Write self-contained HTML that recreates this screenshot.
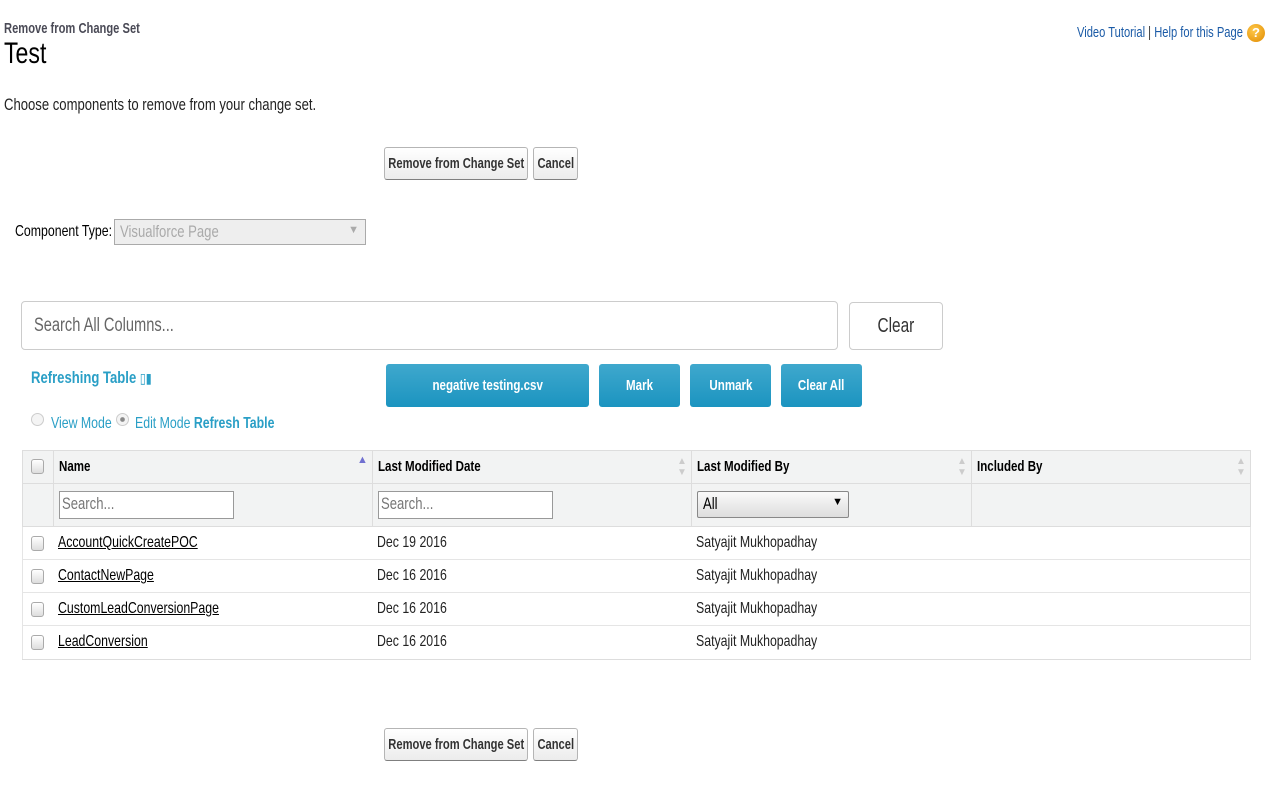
<!DOCTYPE html>
<html><head><meta charset="utf-8"><style>
*{box-sizing:border-box}
body{margin:0;width:1280px;height:800px;background:#fff;font-family:"Liberation Sans",sans-serif;color:#222;position:relative;overflow:hidden;white-space:nowrap}
.a{position:absolute}
.n{display:inline-block;transform:scaleX(.77);transform-origin:left center}
.c{display:inline-block;transform:scaleX(.77);transform-origin:center center;flex:none}
.btn{position:absolute;height:33px;border:1px solid #b5b5b5;border-bottom-color:#7f7f7f;border-radius:3px;background:linear-gradient(#fff,#ececec);font-weight:bold;font-size:14.5px;color:#333;display:flex;justify-content:center;align-items:center}
.bb{position:absolute;top:364px;height:43px;border-radius:3px;background:linear-gradient(#3fa8cd,#1b94c0);color:#fff;font-weight:bold;font-size:15px;display:flex;justify-content:center;align-items:center}
.cb{position:absolute;width:13px;height:15px;border:1px solid #aaa;border-radius:3px;background:linear-gradient(#fff,#ddd)}
.row{position:absolute;left:22px;width:1229px;height:33px;border-bottom:1px solid #e5e5e5;font-size:16px}
.row span{position:absolute;top:7px;display:inline-block;transform:scaleX(.77);transform-origin:left center}
.inp{position:absolute;height:28px;border:1px solid #999;background:#fff;font-size:17px;color:#777;padding:2px 2px}
</style></head><body>
<div class="a" style="left:4px;top:21px;font-size:14.5px;font-weight:bold;color:#4a4a56"><span class="n">Remove from Change Set</span></div>
<div class="a" style="left:4px;top:37px;font-size:30px;color:#000"><span class="n">Test</span></div>
<div class="a" style="left:1077px;top:25px;font-size:14.5px;color:#1a5aa6"><span class="n">Video Tutorial <span style="color:#333">|</span> Help for this Page</span></div>
<div class="a" style="left:1247px;top:24px;width:18px;height:18px;border-radius:50%;background:radial-gradient(circle at 40% 35%,#ffc94a,#e08a00);color:#fff;font-weight:bold;font-size:13px;text-align:center;line-height:18px">?</div>
<div class="a" style="left:4px;top:95px;font-size:17px;color:#222"><span class="n">Choose components to remove from your change set.</span></div>
<div class="btn" style="left:384px;top:147px;width:144px"><span class="c">Remove from Change Set</span></div>
<div class="btn" style="left:533px;top:147px;width:45px"><span class="c">Cancel</span></div>
<div class="a" style="left:15px;top:223px;font-size:16px;color:#000"><span class="n">Component Type:</span></div>
<div class="a" style="left:114px;top:219px;width:252px;height:26px;border:1px solid #aaa;background:#eee;color:#aaa;font-size:17px;padding:2px 5px"><span class="n">Visualforce Page</span><span style="position:absolute;right:6px;top:4px;font-size:11px">▼</span></div>
<div class="a" style="left:21px;top:301px;width:817px;height:49px;border:1px solid #ccc;border-radius:4px;font-size:19px;color:#666;padding:13px 12px"><span class="n">Search All Columns...</span></div>
<div class="a" style="left:849px;top:302px;width:94px;height:48px;border:1px solid #ccc;border-radius:4px;font-size:20px;color:#333;display:flex;justify-content:center;align-items:center"><span class="c">Clear</span></div>
<div class="a" style="left:31px;top:368px;font-size:17px;font-weight:bold;color:#2a9fc6"><span class="n">Refreshing Table <span style="font-weight:normal;font-size:14px">▯▮</span></span></div>
<div class="bb" style="left:386px;width:203px"><span class="c">negative testing.csv</span></div>
<div class="bb" style="left:599px;width:81px"><span class="c">Mark</span></div>
<div class="bb" style="left:690px;width:81px"><span class="c">Unmark</span></div>
<div class="bb" style="left:781px;width:81px"><span class="c">Clear All</span></div>
<div class="a" style="left:31px;top:413px;width:13px;height:13px;border-radius:50%;border:1px solid #ccc;background:#f4f4f4"></div>
<div class="a" style="left:51px;top:415px;font-size:16px;color:#2a9fc6"><span class="n">View Mode</span></div>
<div class="a" style="left:116px;top:413px;width:13px;height:13px;border-radius:50%;border:1px solid #ccc;background:radial-gradient(#888 25%,#f4f4f4 35%)"></div>
<div class="a" style="left:135px;top:415px;font-size:16px;color:#2a9fc6"><span class="n">Edit Mode <b>Refresh Table</b></span></div>
<div class="a" style="left:22px;top:450px;width:1229px;height:77px;background:#f2f3f3;border:1px solid #ddd"></div>
<div class="a" style="left:22px;top:483px;width:1229px;height:1px;background:#ddd"></div>
<div class="a" style="left:53px;top:450px;width:1px;height:77px;background:#ddd"></div>
<div class="a" style="left:372px;top:450px;width:1px;height:77px;background:#ddd"></div>
<div class="a" style="left:691px;top:450px;width:1px;height:77px;background:#ddd"></div>
<div class="a" style="left:971px;top:450px;width:1px;height:77px;background:#ddd"></div>
<div class="cb" style="left:31px;top:459px"></div>
<div class="a" style="left:59px;top:458px;font-size:15px;font-weight:bold;color:#000"><span class="n">Name</span></div>
<div class="a" style="left:357px;top:454px;font-size:11px;color:#7070d0">▲</div>
<div class="a" style="left:378px;top:458px;font-size:15px;font-weight:bold;color:#000"><span class="n">Last Modified Date</span></div>
<div class="a" style="left:677px;top:456px;font-size:10px;color:#ccc;line-height:11px">▲<br>▼</div>
<div class="a" style="left:697px;top:458px;font-size:15px;font-weight:bold;color:#000"><span class="n">Last Modified By</span></div>
<div class="a" style="left:957px;top:456px;font-size:10px;color:#ccc;line-height:11px">▲<br>▼</div>
<div class="a" style="left:977px;top:458px;font-size:15px;font-weight:bold;color:#000"><span class="n">Included By</span></div>
<div class="a" style="left:1236px;top:456px;font-size:10px;color:#ccc;line-height:11px">▲<br>▼</div>
<div class="inp" style="left:59px;top:491px;width:175px"><span class="n">Search...</span></div>
<div class="inp" style="left:378px;top:491px;width:175px"><span class="n">Search...</span></div>
<div class="a" style="left:697px;top:491px;width:152px;height:27px;border:1px solid #888;border-radius:2px;background:linear-gradient(#fafafa,#ddd);font-size:17px;color:#000;padding:2px 5px"><span class="n">All</span><span style="position:absolute;right:5px;top:4px;font-size:11px">▼</span></div>
<div class="a" style="left:22px;top:527px;width:1px;height:133px;background:#e5e5e5"></div>
<div class="a" style="left:1250px;top:527px;width:1px;height:133px;background:#e5e5e5"></div>
<div class="row" style="top:527px"><div class="cb" style="left:9px;top:9px"></div><span style="left:36px;text-decoration:underline;color:#000">AccountQuickCreatePOC</span><span style="left:355px">Dec 19 2016</span><span style="left:674px">Satyajit Mukhopadhay</span></div>
<div class="row" style="top:560px"><div class="cb" style="left:9px;top:9px"></div><span style="left:36px;text-decoration:underline;color:#000">ContactNewPage</span><span style="left:355px">Dec 16 2016</span><span style="left:674px">Satyajit Mukhopadhay</span></div>
<div class="row" style="top:593px"><div class="cb" style="left:9px;top:9px"></div><span style="left:36px;text-decoration:underline;color:#000">CustomLeadConversionPage</span><span style="left:355px">Dec 16 2016</span><span style="left:674px">Satyajit Mukhopadhay</span></div>
<div class="row" style="top:626px;border-bottom-color:#ddd;height:34px"><div class="cb" style="left:9px;top:9px"></div><span style="left:36px;text-decoration:underline;color:#000">LeadConversion</span><span style="left:355px">Dec 16 2016</span><span style="left:674px">Satyajit Mukhopadhay</span></div>
<div class="btn" style="left:384px;top:728px;width:144px"><span class="c">Remove from Change Set</span></div>
<div class="btn" style="left:533px;top:728px;width:45px"><span class="c">Cancel</span></div>
</body></html>
